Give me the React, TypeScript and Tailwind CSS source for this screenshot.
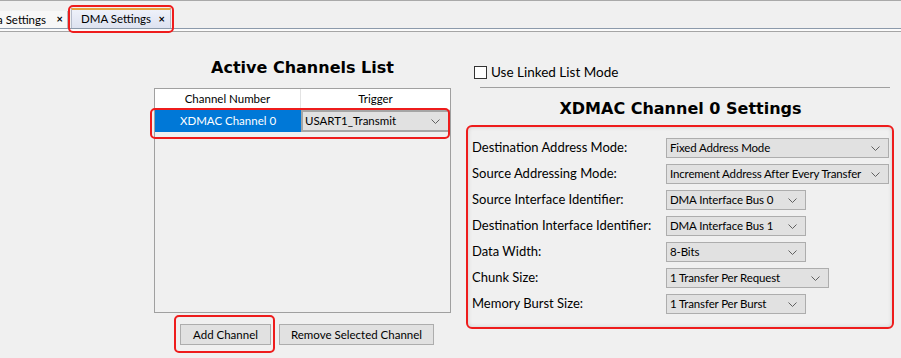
import React from 'react';

const Chevron = () => (
  <svg width="9" height="5" viewBox="0 0 9 5" className="shrink-0">
    <polyline points="0.5,0.5 4.5,4.5 8.5,0.5" fill="none" stroke="#606060" strokeWidth="1" />
  </svg>
);

const Combo: React.FC<{ value: string; width: string }> = ({ value, width }) => (
  <div className={`${width} h-[20px] flex items-center justify-between gap-[5px] bg-[#e1e1e1] border border-[#adadad] pl-[3px] pr-[8px] text-[11.5px] text-black`}>
    <span className="whitespace-nowrap tracking-[-0.15px]">{value}</span>
    <Chevron />
  </div>
);

const rows = [
  { label: 'Destination Address Mode:', value: 'Fixed Address Mode', width: 'w-[223px]' },
  { label: 'Source Addressing Mode:', value: 'Increment Address After Every Transfer', width: 'w-[223px]' },
  { label: 'Source Interface Identifier:', value: 'DMA Interface Bus 0', width: 'w-[140px]' },
  { label: 'Destination Interface Identifier:', value: 'DMA Interface Bus 1', width: 'w-[140px]' },
  { label: 'Data Width:', value: '8-Bits', width: 'w-[140px]' },
  { label: 'Chunk Size:', value: '1 Transfer Per Request', width: 'w-[163px]' },
  { label: 'Memory Burst Size:', value: '1 Transfer Per Burst', width: 'w-[140px]' },
];

export default function App() {
  return (
    <div className="w-[901px] h-[358px] overflow-hidden bg-[#f0f0f0] font-['Lato',sans-serif] text-black">
      {/* Tab strip */}
      <div className="h-[33px] border-t border-[#a9a9a9] relative">
        <div className="flex items-end h-[27px] pt-[8px]">
          <div className="w-[68px] h-[17px] flex items-center justify-between bg-[#f7f7f7] border-r border-[#b9b9b9] text-[11.5px] pr-[4px] overflow-hidden">
            <span className="-ml-[3px] whitespace-nowrap">a Settings</span>
            <span className="font-bold text-[11px]">×</span>
          </div>
          <div className="relative ml-[3px] w-[100px] h-[20px] flex items-center justify-between border-t-2 border-[#e6a23c] bg-gradient-to-b from-[#eef1fa] to-[#dde2f0] border-x border-x-[#b5bccb] pl-[9px] pr-[5px] text-[11.5px]">
            <span>DMA Settings</span>
            <span className="font-bold text-[11px]">×</span>
            <div className="absolute -left-[4px] -top-[5px] w-[106px] h-[28px] border-2 border-[#ee1c1c] rounded-[5px]" />
          </div>
        </div>
        <div className="h-[1px] bg-[#8c9aab]" />
        <div className="h-[2px] bg-[#fbfbfb]" />
        <div className="h-[1px] bg-[#a5a5a5]" />
      </div>

      <div className="flex">
        {/* Left column */}
        <div className="ml-[154px] w-[297px] flex flex-col">
          <div className="h-[55px] flex items-center justify-center pt-[14px] font-['DejaVu_Sans',sans-serif] font-bold text-[16px]">
            Active Channels List
          </div>
          <div className="h-[225px] border border-[#a0a0a0] bg-[#f0f0f0] flex flex-col">
            <div className="flex h-[20px] bg-white text-[11.5px]">
              <div className="w-[146px] flex items-center justify-center border-r border-[#e3e3e3]">Channel Number</div>
              <div className="flex-1 flex items-center justify-center">Trigger</div>
            </div>
            <div className="relative flex h-[22px] mt-[1px] text-[11.5px]">
              <div className="w-[146px] flex items-center justify-center bg-[#0078d7] text-white">XDMAC Channel 0</div>
              <div className="flex-1 flex items-center justify-between bg-[#e1e1e1] border-2 border-[#a5a5a5] pl-[2px] pr-[8px]">
                <span>USART1_Transmit</span>
                <Chevron />
              </div>
              <div className="absolute -left-[5px] -top-[2px] w-[300px] h-[31px] border-2 border-[#ee1c1c] rounded-[5px]" />
            </div>
          </div>
          <div className="flex mt-[11px] gap-[8px] ml-[26px] text-[11.5px]">
            <div className="relative">
              <div className="w-[91px] h-[21px] flex items-center justify-center bg-[#e1e1e1] border border-[#adadad]">Add Channel</div>
              <div className="absolute -left-[6px] -top-[9px] w-[101px] h-[38px] border-2 border-[#ee1c1c] rounded-[5px]" />
            </div>
            <div className="w-[155px] h-[21px] flex items-center justify-center bg-[#e1e1e1] border border-[#adadad]">Remove Selected Channel</div>
          </div>
        </div>

        {/* Right column */}
        <div className="ml-[15px] w-[429px] flex flex-col">
          <div className="flex items-center h-[20px] mt-[29px] ml-[8px] text-[13.5px]">
            <div className="w-[13px] h-[13px] border border-[#333] bg-white mr-[4px]" />
            <span>Use Linked List Mode</span>
          </div>
          <div className="h-[1px] bg-[#a0a0a0] ml-[14px] mr-[5px] mt-[5px]" />
          <div className="h-[38px] flex items-center justify-center pt-[6px] font-['DejaVu_Sans',sans-serif] font-bold text-[16px] -mt-[1px]">
            XDMAC Channel 0 Settings
          </div>
          <div className="w-[428px] h-[204px] border-2 border-[#ee1c1c] rounded-[6px] pt-[11px] pl-[4px] flex flex-col gap-[6px] shadow-[inset_0_0_4px_rgba(0,0,0,0.15)]">
            {rows.map((r) => (
              <div key={r.label} className="flex items-center h-[20px]">
                <div className="w-[194px] text-[13px]">{r.label}</div>
                <Combo value={r.value} width={r.width} />
              </div>
            ))}
          </div>
        </div>
      </div>
    </div>
  );
}
